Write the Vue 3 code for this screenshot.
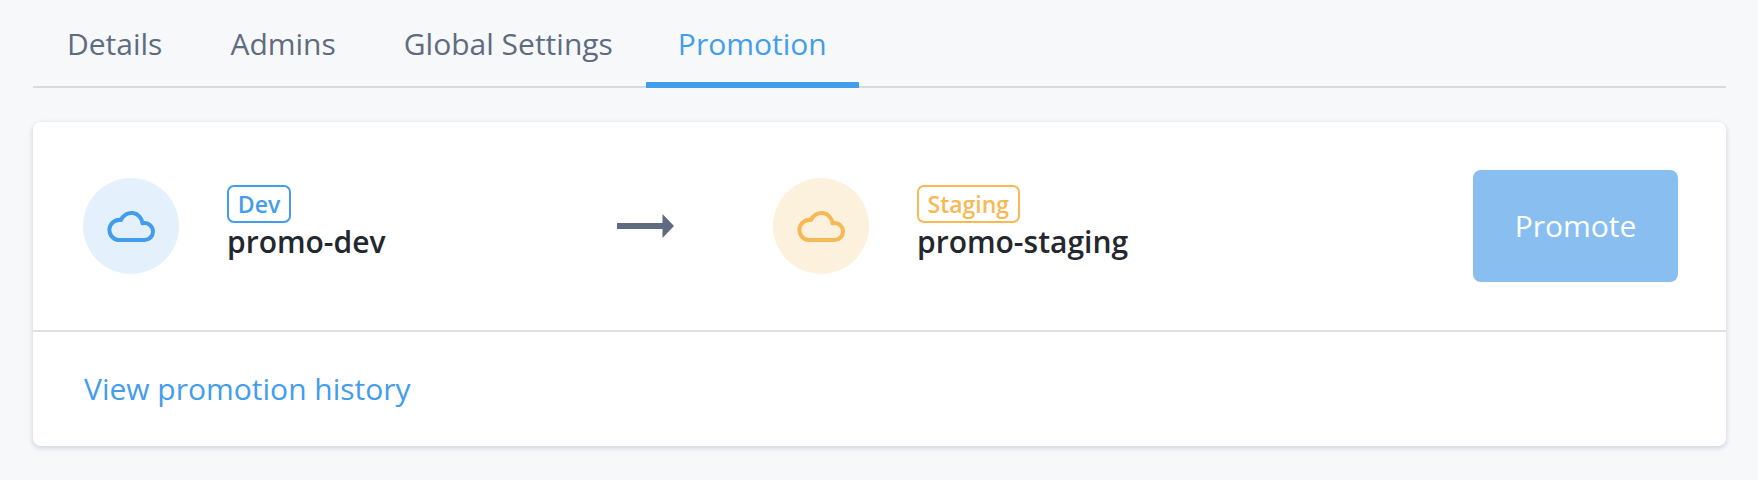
<script setup>
const tabs = ['Details', 'Admins', 'Global Settings', 'Promotion']
const activeTab = 'Promotion'
const cloud = 'M11 30H37.5A8.5 8.5 0 0 0 46 21.5A8.5 8.5 0 0 0 35.4 13.3A11.1 11.1 0 0 0 14 10A10.1 10.1 0 0 0 11 30Z'
</script>

<template>
  <div class="page">
    <nav class="tabs">
      <a v-for="tab in tabs" :key="tab" class="tab" :class="{ active: tab === activeTab }">{{ tab }}</a>
    </nav>

    <section class="card">
      <div class="promotion">
        <div class="env source">
          <div class="circle blue">
            <svg width="48" height="32" viewBox="0 0 48 32" fill="none" stroke="currentColor" stroke-width="4" stroke-linejoin="round">
              <path :d="cloud" />
            </svg>
          </div>
          <div class="env-info">
            <span class="badge blue-badge">Dev</span>
            <div class="name">promo-dev</div>
          </div>
        </div>

        <svg class="arrow" width="57" height="24" viewBox="0 0 57 24">
          <path d="M0 9H45.5V0L57 12L45.5 24V15H0Z" fill="#5f6b80" />
        </svg>

        <div class="env">
          <div class="circle orange">
            <svg width="48" height="32" viewBox="0 0 48 32" fill="none" stroke="currentColor" stroke-width="4" stroke-linejoin="round">
              <path :d="cloud" />
            </svg>
          </div>
          <div class="env-info">
            <span class="badge orange-badge">Staging</span>
            <div class="name">promo-staging</div>
          </div>
        </div>

        <button class="promote" disabled>Promote</button>
      </div>

      <div class="footer">
        <a class="history">View promotion history</a>
      </div>
    </section>
  </div>
</template>

<style>
html,
body {
  margin: 0;
  background: #f7f8fa;
}
</style>

<style scoped>
.page {
  width: 1758px;
  height: 480px;
  box-sizing: border-box;
  padding: 0 32px 0 33px;
  background: #f7f8fa;
  font-family: "Open Sans", "Noto Sans", sans-serif;
  overflow: hidden;
}

.tabs {
  display: flex;
  height: 88px;
  box-sizing: border-box;
  border-bottom: 2px solid #d5dbe2;
}

.tab {
  height: 88px;
  box-sizing: border-box;
  padding: 24px 34px 0;
  font-size: 30px;
  line-height: 40px;
  color: #5f6b80;
}

.tab.active {
  margin-left: -1px;
  padding: 24px 32px 0;
  color: #439ded;
  border-bottom: 6px solid #439ded;
}

.card {
  margin-top: 34px;
  height: 324px;
  background: #fff;
  border-radius: 8px;
  box-shadow: 0 2px 4px 1px rgba(140, 150, 175, 0.3);
}

.promotion {
  display: flex;
  align-items: center;
  height: 210px;
  box-sizing: border-box;
  padding: 0 48px 0 50px;
  border-bottom: 2px solid #e0e0e2;
}

.env {
  display: flex;
  align-items: center;
  gap: 48px;
}

.source {
  width: 534px;
}

.arrow {
  margin-right: 99px;
  flex-shrink: 0;
}

.circle {
  width: 96px;
  height: 96px;
  border-radius: 50%;
  display: flex;
  align-items: center;
  justify-content: center;
}

.circle.blue {
  background: #e4f1fc;
  color: #439ded;
}

.circle.orange {
  background: #fcf1dc;
  color: #f7b955;
}

.env-info {
  display: flex;
  flex-direction: column;
  align-items: flex-start;
  margin-bottom: 6px;
}

.badge {
  box-sizing: border-box;
  height: 38px;
  min-width: 64px;
  padding: 0 8.5px;
  border: 2px solid;
  border-radius: 7px;
  font-size: 23px;
  font-weight: 600;
  line-height: 34px;
  text-align: center;
}

.blue-badge {
  color: #439ded;
  border-color: #439ded;
}

.orange-badge {
  color: #f7b955;
  border-color: #f7b955;
}

.name {
  font-size: 30px;
  font-weight: 600;
  line-height: 38px;
  color: #23272e;
}

.promote {
  margin-left: auto;
  width: 205px;
  height: 112px;
  padding: 0 0 2px;
  border: none;
  border-radius: 8px;
  background: #89bff0;
  color: #fff;
  font-family: inherit;
  font-size: 30px;
}

.footer {
  padding: 37px 51px;
}

.history {
  font-size: 30px;
  line-height: 40px;
  color: #439ded;
}
</style>
